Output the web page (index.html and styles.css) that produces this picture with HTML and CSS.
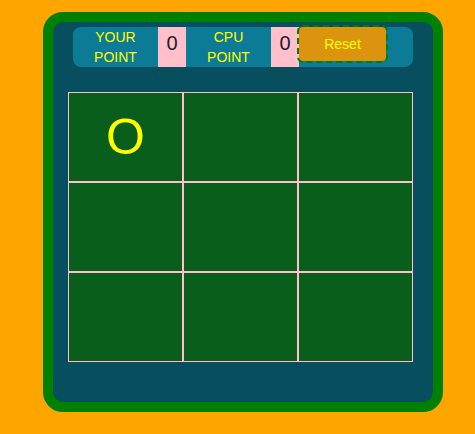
FILE: index.html
```html
<!DOCTYPE html>
<html>
<head>
<meta charset="utf-8">
<link rel="stylesheet" href="styles.css">
</head>
<body>
<div class="frame">
  <div class="panel">
    <div class="score-bar">
      <div class="label">YOUR<br>POINT</div>
      <div class="score">0</div>
      <div class="label">CPU<br>POINT</div>
      <div class="score">0</div>
      <button class="reset">Reset</button>
    </div>
    <div class="board">
      <div class="cell">O</div>
      <div class="cell"></div>
      <div class="cell"></div>
      <div class="cell"></div>
      <div class="cell"></div>
      <div class="cell"></div>
      <div class="cell"></div>
      <div class="cell"></div>
      <div class="cell"></div>
    </div>
  </div>
</div>
</body>
</html>
```
FILE: styles.css
```css
html, body {
  margin: 0;
  padding: 0;
}
body {
  background: #ffa500;
  font-family: "Liberation Sans", Arial, sans-serif;
  width: 475px;
  height: 434px;
  padding: 12px 0 0 43px;
  box-sizing: border-box;
}
.frame {
  width: 400px;
  height: 400px;
  box-sizing: border-box;
  border: 10px solid #008000;
  border-radius: 20px;
  background: #074e5f;
  overflow: hidden;
}
.panel {
  padding: 5px 0 0 0;
}
.score-bar {
  margin-left: 20px;
  width: 340px;
  height: 40px;
  background: #0b7b96;
  border-radius: 8px;
  display: flex;
  align-items: stretch;
}
.label {
  width: 85px;
  color: #ffff00;
  font-size: 14px;
  line-height: 20px;
  text-align: center;
}
.score {
  width: 28px;
  background: #ffc0cb;
  color: #1c1c2e;
  font-size: 20px;
  text-align: center;
  padding-top: 5px;
  box-sizing: border-box;
  line-height: 23px;
}
.reset {
  align-self: flex-start;
  margin-left: 0;
  width: 87px;
  height: 34px;
  box-sizing: border-box;
  background: #dc940e;
  color: #ffff00;
  font-family: "Liberation Sans", Arial, sans-serif;
  font-size: 14px;
  border: none;
  border-radius: 4px;
  outline: 2px dashed #008000;
  padding: 0;
}
.board {
  margin: 25px 0 0 15px;
  display: grid;
  grid-template-columns: repeat(3, 115px);
  grid-template-rows: repeat(3, 90px);
  width: 345px;
}
.cell {
  box-sizing: border-box;
  border: 1px solid #ffc0cb;
  background: #0a5e1b;
  color: #ffff00;
  font-size: 50px;
  display: flex;
  align-items: center;
  justify-content: center;
}
```
